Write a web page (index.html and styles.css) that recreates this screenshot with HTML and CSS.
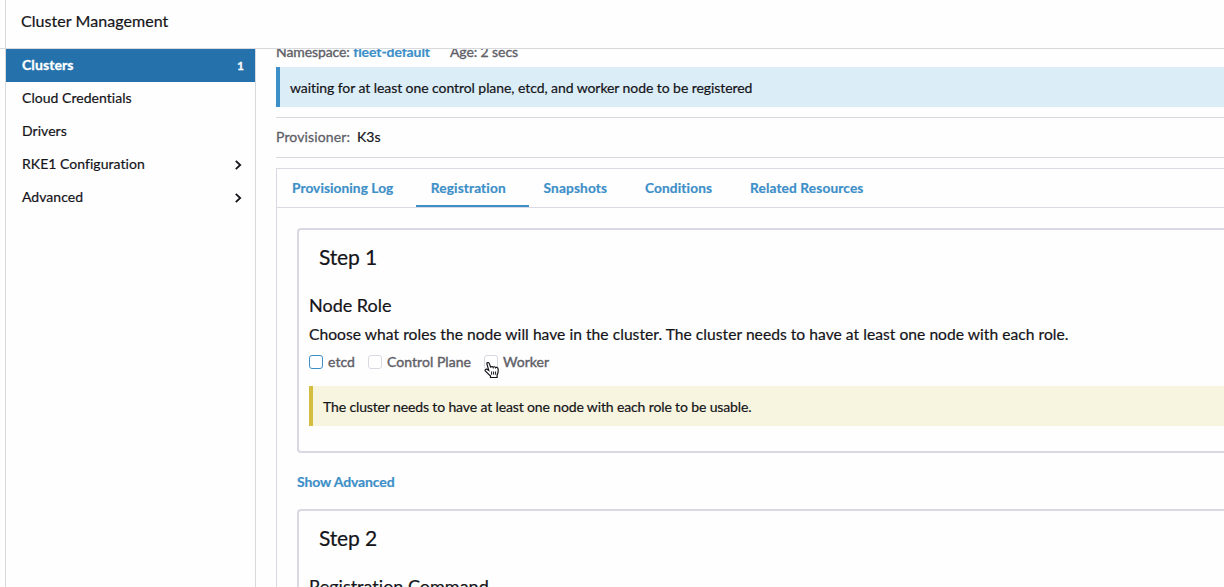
FILE: index.html
```html
<!DOCTYPE html>
<html lang="en">
<head>
<meta charset="utf-8">
<title>Cluster Management</title>
<link rel="stylesheet" href="styles.css">
</head>
<body>
<div class="app">
  <header class="header">Cluster Management</header>
  <div class="body">
    <nav class="sidebar">
      <a class="item active"><span>Clusters</span><span class="count">1</span></a>
      <a class="item">Cloud Credentials</a>
      <a class="item">Drivers</a>
      <a class="item"><span>RKE1 Configuration</span><svg class="chevron" viewBox="0 0 8 10"><path d="M1.8 .8 6.2 5 1.8 9.2"/></svg></a>
      <a class="item"><span>Advanced</span><svg class="chevron" viewBox="0 0 8 10"><path d="M1.8 .8 6.2 5 1.8 9.2"/></svg></a>
    </nav>
    <main class="main">
      <div class="meta"><span>Namespace: <a class="link">fleet-default</a></span><span class="age">Age: 2 secs</span></div>
      <div class="banner info"><span class="t-info">waiting for at least one control plane, etcd, and worker node to be registered</span></div>
      <div class="provisioner"><span class="label">Provisioner:</span><span>K3s</span></div>
      <div class="tabs">
        <a class="tab">Provisioning Log</a><a class="tab selected">Registration</a><a class="tab">Snapshots</a><a class="tab">Conditions</a><a class="tab">Related Resources</a>
      </div>
      <div class="panel">
        <section class="step">
          <h2>Step 1</h2>
          <h3>Node Role</h3>
          <p>Choose what roles the node will have in the cluster. The cluster needs to have at least one node with each role.</p>
          <div class="checks">
            <label class="check focus"><i class="box"></i>etcd</label>
            <label class="check"><i class="box"></i>Control Plane</label>
            <label class="check"><i class="box"></i>Worker
              <svg class="cursor" viewBox="0 0 16 18"><path d="M4.8 9.4 3 3.4C2.4 1.4 4.6.8 5.3 2.6l1.5 3.9c.1-1.2 2-1.3 2.4-.1.4-1 2.1-.8 2.4.3.6-.8 2.2-.4 2.4.9.4 2.3.3 4.4-.9 6.5v2.4H6.5v-1.5C4.8 13.6 3.2 12 1.5 10.2.4 8.6 2.2 7.5 3.3 8.5z"/><path class="lines" d="M7.6 10.5v3.2M9.6 10.5v3.2M11.6 10.5v3.2"/></svg>
            </label>
          </div>
          <div class="banner warning"><span class="t-warn">The cluster needs to have at least one node with each role to be usable.</span></div>
        </section>
        <a class="advanced">Show Advanced</a>
        <section class="step">
          <h2>Step 2</h2>
          <h3>Registration Command</h3>
        </section>
      </div>
    </main>
  </div>
</div>
</body>
</html>
```
FILE: styles.css
```css
* { box-sizing: border-box; }
body { margin: 0; background: #fefefe; color: #141419; font: 14px/20px Lato, "Liberation Sans", sans-serif; font-variant-ligatures: none; -webkit-text-stroke: .2px; }
.app { width: 1224px; height: 587px; overflow: hidden; }
.header { height: 49px; padding: 11px 15px 0 21px; border-bottom: 1px solid #d8d9dd; font-size: 16px; letter-spacing: .06px; background: linear-gradient(90deg, transparent 5px, #d8d9dd 5px, #d8d9dd 6px, transparent 6px); }
.body { display: flex; height: 538px; padding-left: 5px; }
.sidebar { flex: 0 0 251px; border: 1px solid #d8d9dd; border-width: 0 1px; }
.item { display: flex; justify-content: space-between; align-items: center; height: 33px; padding: 0 13px 2px 16px; letter-spacing: .04px; }
.item.active { background: #2471ab; color: #fff; font-weight: 700; letter-spacing: .1px; -webkit-text-stroke: .3px; }
.count { font-size: 12px; margin: 2px -2px 0 0; }
.chevron { width: 8px; height: 10px; margin-top: 2px; fill: none; stroke: #141419; stroke-width: 1.8; }
.main { flex: 1; min-width: 0; padding-left: 20px; overflow: hidden; }
.meta { display: flex; gap: 20px; height: 18px; line-height: 6px; color: #606068; -webkit-text-stroke: .35px; letter-spacing: -.09px; }
.link { color: #3d8fc8; font-weight: 700; -webkit-text-stroke: .2px; }
.banner { display: flex; align-items: center; height: 40px; padding: 2px 10px 0; border-left: 4px solid; color: #141419; }
.info { background: #dbedf6; border-color: #3d8fc8; }
.t-info, .t-warn { color: #141419; }
.t-info { letter-spacing: -.07px; }
.t-warn { letter-spacing: -.13px; }
.provisioner { display: flex; align-items: center; gap: 7px; height: 41px; margin-top: 10px; padding-bottom: 2px; border: 1px solid #d8d9e3; border-width: 1px 0; }
.label { color: #606068; letter-spacing: .12px; -webkit-text-stroke: .3px; }
.tabs { display: flex; height: 40px; margin-top: 10px; border: 1px solid #d8d9e3; border-right: 0; }
.tab { padding: 9px 22.8px 0 15px; height: 38px; color: #3d8fc8; font-weight: 700; font-size: 13.7px; letter-spacing: .13px; -webkit-text-stroke: .2px; }
.tab:first-child { padding-right: 22.4px; letter-spacing: .07px; }
.tab.selected { border-bottom: 2px solid #3d8fc8; }
.panel { border-left: 1px solid #d8d9e3; padding: 20px 0 0 20px; height: 400px; }
.step { height: 225px; padding: 9px 0 0 10px; border: 2px solid #d8d9e3; border-right: 0; border-radius: 4px 0 0 4px; }
h2 { margin: 5px 10px 0; font: 400 21px/26px Lato, sans-serif; letter-spacing: -.15px; }
h3 { margin: 24px 0 0; font: 400 18px/22px Lato, sans-serif; font-variant-ligatures: none; }
p { margin: 8px 0 0; font-size: 15.6px; line-height: 20px; letter-spacing: .042px; }
.checks { display: flex; gap: 13px; margin-top: 8px; height: 20px; color: #606068; -webkit-text-stroke: .4px; }
.check { position: relative; display: flex; align-items: center; gap: 5px; letter-spacing: .05px; }
.box { width: 14px; height: 14px; border: 1px solid #d8d9e3; border-radius: 3px; background: #fff; }
.focus .box { border-color: #3d8fc8; }
.cursor { position: absolute; left: 0; top: 9px; width: 16px; height: 18px; fill: #fff; stroke: #141419; stroke-width: 1.2; }
.cursor .lines { fill: none; stroke-width: 1; }
.warning { margin-top: 14px; background: #f7f4df; border-color: #d4bd40; }
.advanced { display: block; height: 20px; margin: 19px 0 17px; color: #3d8fc8; font-weight: 700; letter-spacing: -.12px; -webkit-text-stroke: .2px; }
```
